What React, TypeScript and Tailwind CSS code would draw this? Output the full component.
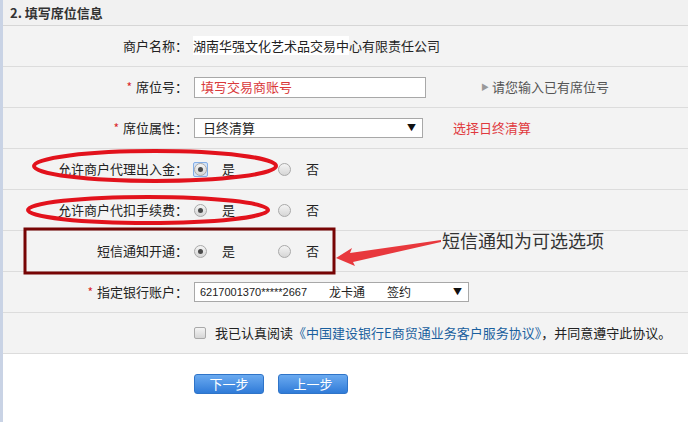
import React from "react";

const Star = () => <span className="mr-[4px] text-[12px] text-[#d9262c]">*</span>;

function Radio({ checked, focus }: { checked?: boolean; focus?: boolean }) {
  return (
    <span
      className={
        focus
          ? "flex h-[15px] w-[15px] items-center justify-center rounded-[2px] border border-[#84aee6] bg-[#d3e3f8]"
          : "flex h-[15px] w-[15px] items-center justify-center"
      }
    >
      <span className="flex h-[13px] w-[13px] items-center justify-center rounded-full border border-[#a9a9a9] bg-linear-to-b from-[#f4f4f4] to-[#d6d6d6]">
        {checked && <span className="h-[5px] w-[5px] rounded-full bg-[#4a4a4a]" />}
      </span>
    </span>
  );
}

function Row({ label, star, children }: { label: string; star?: boolean; children: React.ReactNode }) {
  return (
    <div className="flex h-[41px] items-center border-b border-[#dcdcdc] bg-[#f3f3f3]">
      <div className="w-[185px] shrink-0 text-right text-[13px] text-[#222]">
        {star && <Star />}
        {label}
      </div>
      <div className="flex items-center pl-[5px]">{children}</div>
    </div>
  );
}

function YesNo({ focus }: { focus?: boolean }) {
  return (
    <div className="flex items-center text-[13px] text-[#222]">
      <Radio checked focus={focus} />
      <span className="ml-[14px]">是</span>
      <span className="ml-[42px]">
        <Radio />
      </span>
      <span className="ml-[14px]">否</span>
    </div>
  );
}

const Arrow = () => <span className="text-[9px] text-[#111]">▼</span>;

export default function App() {
  return (
    <div className="relative flex h-[422px] w-[688px] overflow-hidden bg-white font-['Noto_Sans_CJK_SC',sans-serif] leading-[16px]">
      <div className="w-[3px] shrink-0 bg-[#c9d3e5]" />
      <div className="flex-1">
        <div className="flex h-[26px] items-center border-b border-[#d6d6d6] bg-[#f1f1f1] pl-[7px] text-[13px] font-bold text-[#333]">
          2. 填写席位信息
        </div>

        <Row label="商户名称：">
          <span className="text-[13px] text-[#222]">
            <span className="bg-white">湖南华强文化艺术品交易中</span>心有限责任公司
          </span>
        </Row>

        <Row label="席位号：" star>
          <div className="ml-[1px] flex h-[21px] w-[232px] items-center border border-[#a8a8a8] bg-white pl-[6px] text-[13px] text-[#d9383a]">
            填写交易商账号
          </div>
          <span className="ml-[55px] text-[8px] text-[#999]">▶</span>
          <span className="ml-[3px] text-[13px] text-[#555]">请您输入已有席位号</span>
        </Row>

        <Row label="席位属性：" star>
          <div className="ml-[1px] flex h-[20px] w-[229px] items-center justify-between border border-[#a8a8a8] bg-white pl-[8px] pr-[6px] text-[13px] text-[#222]">
            <span>日终清算</span>
            <Arrow />
          </div>
          <span className="ml-[30px] text-[13px] text-[#e0393e]">选择日终清算</span>
        </Row>

        <Row label="允许商户代理出入金：">
          <YesNo focus />
        </Row>

        <Row label="允许商户代扣手续费：">
          <YesNo />
        </Row>

        <Row label="短信通知开通：">
          <YesNo />
        </Row>

        <Row label="指定银行账户：" star>
          <div className="ml-[1px] flex h-[20px] w-[275px] items-center justify-between border border-[#a8a8a8] bg-white pl-[5px] pr-[6px] text-[#222]">
            <span className="flex items-center">
              <span className="font-['Liberation_Sans',sans-serif] text-[11px]">6217001370*****2667</span>
              <span className="ml-[22px] text-[12px]">龙卡通</span>
              <span className="ml-[22px] text-[12px]">签约</span>
            </span>
            <Arrow />
          </div>
        </Row>

        <div className="flex h-[41px] items-center border-b border-[#dcdcdc] bg-[#f3f3f3] pl-[191px] text-[13px] text-[#222]">
          <span className="h-[12px] w-[12px] rounded-[2px] border border-[#a9a9a9] bg-linear-to-b from-[#f4f4f4] to-[#d6d6d6]" />
          <span className="ml-[9px] whitespace-nowrap">
            我已认真阅读<span className="text-[#1a5f9e]">《中国建设银行E商贸通业务客户服务协议》</span>，并同意遵守此协议。
          </span>
        </div>

        <div className="flex gap-[14px] pl-[191px] pt-[20px]">
          {["下一步", "上一步"].map((t) => (
            <button
              key={t}
              className="flex h-[20px] w-[70px] items-center justify-center rounded-[3px] border border-[#2f74c8] bg-linear-to-b from-[#6aaaf0] to-[#2f7bd8] text-[13px] text-white"
            >
              {t}
            </button>
          ))}
        </div>
      </div>

      <svg className="pointer-events-none absolute left-0 top-0" width="688" height="422">
        <ellipse cx="155" cy="166" rx="121" ry="15" fill="none" stroke="#e2121c" strokeWidth="4" />
        <ellipse cx="148" cy="210" rx="120" ry="13" fill="none" stroke="#e2121c" strokeWidth="4" />
        <rect x="25" y="229" width="309" height="44" fill="none" stroke="#770404" strokeWidth="3" />
        <polygon points="336,258 352,248 350,253 441,240 441,242 353,262 355,266" fill="#e8383d" />
      </svg>
      <span className="absolute left-[442px] top-[229px] text-[18px] leading-[22px] text-[#333]">
        短信通知为可选选项
      </span>
    </div>
  );
}
